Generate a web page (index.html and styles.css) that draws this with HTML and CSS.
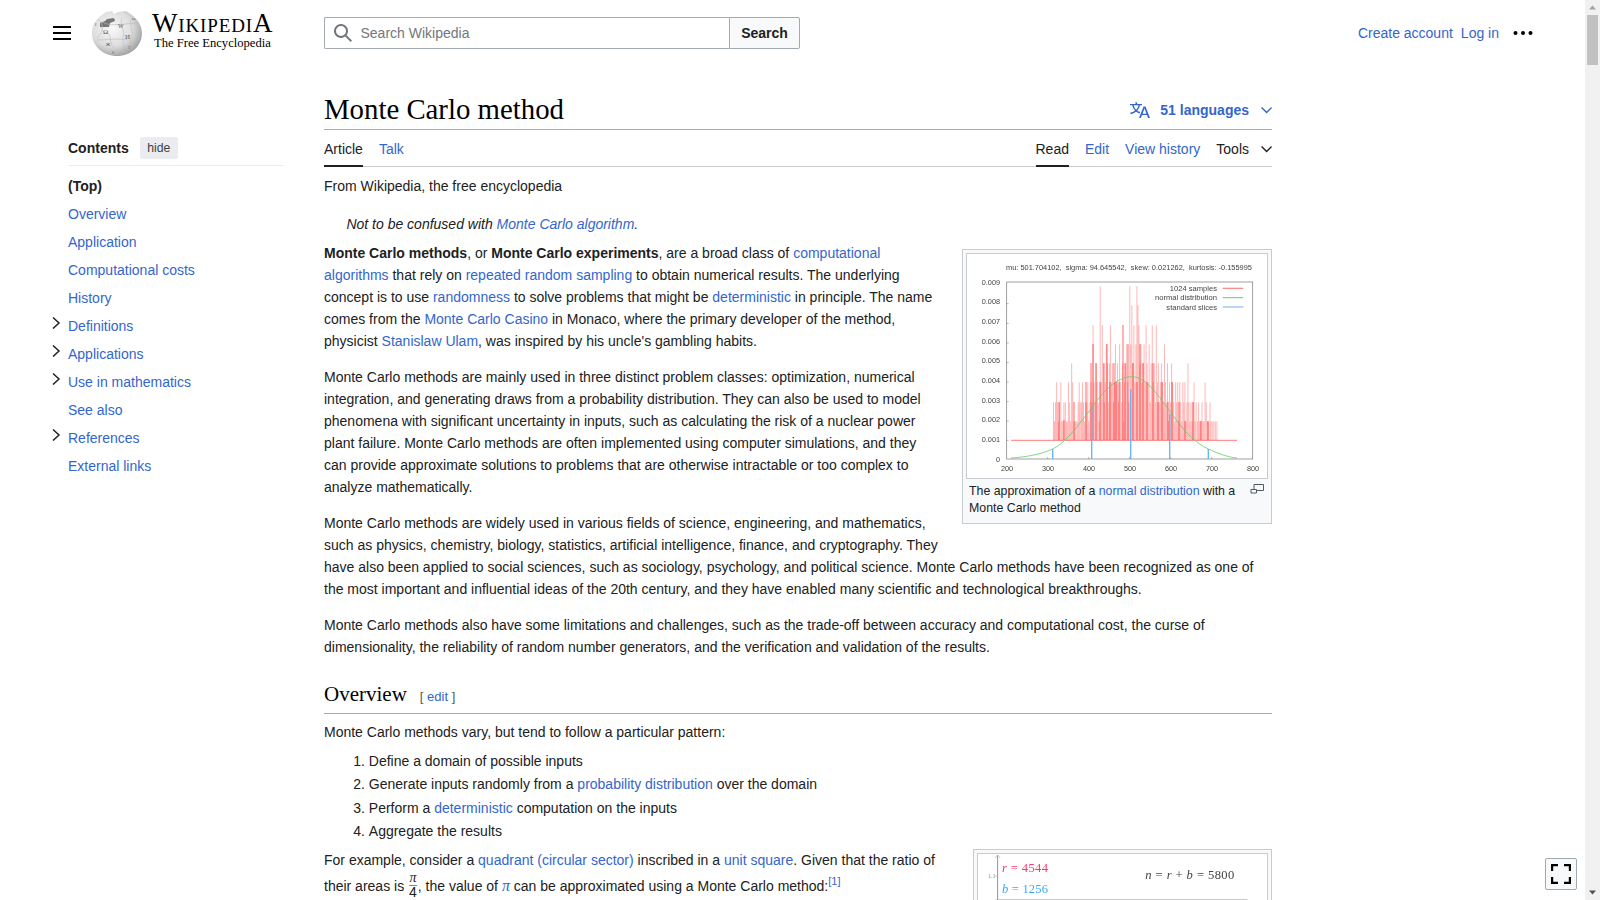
FILE: index.html
```html
<!DOCTYPE html>
<html lang="en">
<head>
<meta charset="utf-8">
<title>Monte Carlo method - Wikipedia</title>
<link rel="stylesheet" href="styles.css">
</head>
<body>
<div class="window">
<div class="page">
  <header class="site-header">
    <div class="brand">
      <svg class="hamburger" viewBox="0 0 20 20" width="20" height="20"><path d="M1 3v2h18V3zm0 8h18V9H1zm0 6h18v-2H1z"/></svg>
      <svg class="globe" viewBox="0 0 50 46" width="50" height="46">
        <defs><radialGradient id="gl" cx="40%" cy="38%" r="68%"><stop offset="0" stop-color="#fafafa"/><stop offset=".6" stop-color="#dcdcdc"/><stop offset="1" stop-color="#9a9a9a"/></radialGradient></defs>
        <path d="M10 5 L14 2 L20 1 L22 4 L26 2 L34 1 L40 5 C46 10 50 16 50 23 C50 36 39 46 25 46 C11 46 0 36 0 23 C0 15 4 9 10 5Z" fill="url(#gl)"/>
        <path d="M8 13 L13 11 L15 9 L22 8 L23 11 L18 13 L17 17 L8 17Z" fill="#777"/>
        <path d="M6 9 C12 14 12 22 5 28 M15 22 C20 26 17 34 22 38 M30 8 C27 16 34 20 31 28 C30 33 34 36 32 43 M40 8 C36 14 43 22 39 28 C36 32 42 36 40 40 M5 30 C14 30 24 28 36 30 M10 12 C20 18 34 12 46 14" fill="none" stroke="#bbb" stroke-width=".6"/>
        <text class="globe-glyph" x="11" y="24" font-size="7">Ω</text>
        <text class="globe-glyph" x="26" y="18" font-size="6">W</text>
        <text class="globe-glyph" x="33" y="29" font-size="7">И</text>
        <text class="globe-glyph" x="14" y="36" font-size="6">ж</text>
        <text class="globe-glyph" x="20" y="44" font-size="4">ই</text>
        <text class="globe-glyph" x="40" y="10" font-size="5">ω</text>
        <text class="globe-glyph" x="36" y="39" font-size="5">?</text>
        <text class="globe-glyph" x="3" y="16" font-size="4">វ</text>
      </svg>
      <div class="wordmark">
        <div class="wm-title">WikipediA</div>
        <div class="wm-tag">The Free Encyclopedia</div>
      </div>
    </div>
    <div class="search">
      <div class="search-input">
        <svg viewBox="0 0 20 20" width="20" height="20"><path d="M12.2 13.6a7 7 0 1 1 1.4-1.4l5.4 5.4-1.4 1.4zM3 8a5 5 0 1 0 10 0A5 5 0 0 0 3 8"/></svg>
        <span>Search Wikipedia</span>
      </div>
      <div class="search-btn">Search</div>
    </div>
    <nav class="user-links">
      <a href="#">Create account</a>
      <a href="#">Log in</a>
      <svg class="dots" viewBox="0 0 20 20" width="20" height="20"><circle cx="2.5" cy="10" r="2"/><circle cx="10" cy="10" r="2"/><circle cx="17.5" cy="10" r="2"/></svg>
    </nav>
  </header>

  <div class="layout">
    <aside class="toc">
      <div class="toc-head"><span class="toc-title">Contents</span><span class="toc-hide">hide</span></div>
      <ul class="toc-list">
        <li class="toc-top">(Top)</li>
        <li><a href="#">Overview</a></li>
        <li><a href="#">Application</a></li>
        <li><a href="#">Computational costs</a></li>
        <li><a href="#">History</a></li>
        <li><svg class="toc-arrow" viewBox="0 0 12 12"><path d="M3 .5 L9 6 L3 11.5" fill="none" stroke="#202122" stroke-width="1.5"/></svg><a href="#">Definitions</a></li>
        <li><svg class="toc-arrow" viewBox="0 0 12 12"><path d="M3 .5 L9 6 L3 11.5" fill="none" stroke="#202122" stroke-width="1.5"/></svg><a href="#">Applications</a></li>
        <li><svg class="toc-arrow" viewBox="0 0 12 12"><path d="M3 .5 L9 6 L3 11.5" fill="none" stroke="#202122" stroke-width="1.5"/></svg><a href="#">Use in mathematics</a></li>
        <li><a href="#">See also</a></li>
        <li><svg class="toc-arrow" viewBox="0 0 12 12"><path d="M3 .5 L9 6 L3 11.5" fill="none" stroke="#202122" stroke-width="1.5"/></svg><a href="#">References</a></li>
        <li><a href="#">External links</a></li>
      </ul>
    </aside>

    <main class="content">
      <div class="title-row">
        <h1>Monte Carlo method</h1>
        <a class="langs" href="#">
          <svg class="lang-icon" viewBox="0 0 20 20" width="20" height="20"><path d="M20 18h-1.44a.6.6 0 0 1-.4-.12.8.8 0 0 1-.23-.31L17 15h-5l-1 2.54a.8.8 0 0 1-.22.3.6.6 0 0 1-.4.14H9l4.55-11.47h1.89zm-3.53-4.31L14.89 9.5a12 12 0 0 1-.39-1.24q-.09.37-.19.69l-.19.56-1.58 4.19zm-6.3-1.58a13.4 13.4 0 0 1-2.91-1.41 11.46 11.46 0 0 0 2.81-5.37H12V4H7.31a4 4 0 0 0-.2-.56C6.87 2.79 6.6 2 6.6 2l-1.47.5s.4.89.6 1.5H0v1.33h2.15A11.23 11.23 0 0 0 5 10.7a17.2 17.2 0 0 1-5 2.1q.56.82.87 1.38a23.3 23.3 0 0 0 5.22-2.51 15.6 15.6 0 0 0 3.56 1.77zM3.63 5.33h4.91a8.1 8.1 0 0 1-2.45 4.45 9.1 9.1 0 0 1-2.46-4.45"/></svg>
          <span>51 languages</span>
          <svg class="chev" viewBox="0 0 12 12" width="12" height="12"><path d="m11.6 3.5-5 5-5-5" fill="none" stroke="currentColor" stroke-width="1.4"/></svg>
        </a>
      </div>
      <div class="tabs">
        <div class="tab-group">
          <a class="tab is-active" href="#">Article</a>
          <a class="tab" href="#">Talk</a>
        </div>
        <div class="tab-group">
          <a class="tab is-active" href="#">Read</a>
          <a class="tab" href="#">Edit</a>
          <a class="tab" href="#">View history</a>
          <span class="tab tab-tools">Tools <svg class="chev" viewBox="0 0 12 12" width="12" height="12"><path d="m11.6 3.5-5 5-5-5" fill="none" stroke="currentColor" stroke-width="1.4"/></svg></span>
        </div>
      </div>

      <article class="article">
        <div class="sitesub">From Wikipedia, the free encyclopedia</div>
        <div class="hatnote">Not to be confused with <a href="#">Monte Carlo algorithm</a>.</div>

        <figure class="thumb thumb-a">
          <div class="thumb-img">
            <svg class="plot" viewBox="0 0 300 224" width="300" height="224">
              <g class="plot-txt">
                <text x="39" y="16" textLength="246" lengthAdjust="spacingAndGlyphs">mu: 501.704102,&#160;&#160;sigma: 94.645542,&#160;&#160;skew: 0.021262,&#160;&#160;kurtosis: -0.155995</text>
                <g text-anchor="end">
                  <text x="33" y="30.5">0.009</text><text x="33" y="50">0.008</text><text x="33" y="69.8">0.007</text><text x="33" y="89.5">0.006</text><text x="33" y="109">0.005</text><text x="33" y="128.8">0.004</text><text x="33" y="148.5">0.003</text><text x="33" y="168">0.002</text><text x="33" y="187.8">0.001</text><text x="33" y="207.5">0</text>
                </g>
                <g text-anchor="middle">
                  <text x="40" y="217">200</text><text x="81" y="217">300</text><text x="122" y="217">400</text><text x="163" y="217">500</text><text x="204" y="217">600</text><text x="245" y="217">700</text><text x="286" y="217">800</text>
                </g>
                <g class="plot-legend" text-anchor="end">
                  <text x="250" y="36.5">1024 samples</text><text x="250" y="46">normal distribution</text><text x="250" y="55.5">standard slices</text>
                </g>
              </g>
              <rect x="39.7" y="28" width="246" height="177" fill="none" stroke="#777" stroke-width=".7"/>
              <path d="M80.7 205v-2M121.7 205v-2M162.7 205v-2M203.7 205v-2M244.7 205v-2M39.7 186.3h2M39.7 167h2M39.7 147.6h2M39.7 128h2M39.7 108.6h2M39.7 89h2M39.7 69.4h2M39.7 49.7h2" stroke="#777" stroke-width=".5" fill="none"/>
              <path class="hist-base" d="M44 186.3H270"/>
              <g transform="translate(86.5 0) scale(1.02 1)">
              <path class="hist" d="M0 186.3v-38m1 38v-19m1 19v-38m1 38v-58m1 58v-38m1 38v-19m1 19v-38m1.2 38v-58m1 58v-19m1 19v-19m1 19v-38m1.4 38v-38m1 38v-19m1 19v-19m1 19v-58m1.2 58v-38m1 38v-19m1 19v-77m1 77v-58m1.2 58v-19m1 19v-19m1 19v-19m1.2 19v-19m1 19v-38m1 38v-58m1 58v-38m1.2 38v-38m1 38v-58m1 58v-38m1 38v-19m1.2 19v-38m1 38v-38m1 38v-58m1 58v-19m1.2 19v-38m1 38v-58m1 58v-38m1 38v-115m1 115v-58m1 58v-38m1 38v-77m1 77v-58m1 58v-38m1 38v-19m1 19v-154m1 154v-58m1 58v-115m1 115v-77m1 77v-38m1 38v-58m1 58v-96m1 96v-77m1 77v-38m1 38v-77m1 77v-115m1 115v-58m1 58v-77m1 77v-38m1 38v-58m1 58v-96m1 96v-58m1 58v-77m1 77v-38m1 38v-96m1 96v-58m1 58v-38m1 38v-77m1 77v-19m1 19v-58m1 58v-77m1 77v-96m1 96v-58m1 58v-38m1 38v-154m1 154v-96m1 96v-135m1 135v-77m1 77v-115m1 115v-58m1 58v-96m1 96v-154m1 154v-135m1 135v-115m1 115v-77m1 77v-96m1 96v-58m1 58v-77m1 77v-96m1 96v-58m1 58v-115m1 115v-77m1 77v-58m1 58v-96m1 96v-38m1 38v-77m1 77v-115m1 115v-58m1 58v-77m1 77v-38m1 38v-115m1 115v-58m1 58v-77m1 77v-38m1 38v-58m1 58v-77m1 77v-58m1 58v-38m1 38v-96m1 96v-58m1 58v-38m1 38v-77m1 77v-19m1 19v-58m1 58v-38m1 38v-77m1 77v-58m1 58v-38m1 38v-19m1 19v-58m1 58v-38m1 38v-58m1 58v-19m1 19v-58m1 58v-38m1 38v-19m1 19v-58m1 58v-38m1 38v-58m1 58v-19m1 19v-38m1 38v-77m1 77v-38m1 38v-19m1 19v-38m1 38v-19m1 19v-38m1 38v-58m1 58v-19m1 19v-38m1.4 38v-19m1 19v-38m1 38v-19m1 19v-19m1.4 19v-38m1 38v-19m1 19v-19m1 19v-58m1.2 58v-38m1 38v-19m1 19v-19m1.6 19v-38m1 38v-19m1.2 19v-19m1.6 19v-19m1.4 19v-19m1.6 19v-19"/>
              </g>
              <path class="hist-red" d="M92 186v-38M97 186v-20M107 186v-38M119 186v-58M124 186v-77M126 186v-96M129 186v-77M133 186v-58M137 186v-77M140 186v-96M143 186v-58M147 186v-77M149 186v-58M152 186v-58M156 186v-115M158 186v-77M161 186v-96M166 186v-77M170 186v-58M173 186v-96M176 186v-77M180 186v-58M186 186v-77M191 186v-38M195 186v-58M201 186v-38M205 186v-58M212 186v-38M218 186v-19M226 186v-38M234 186v-19M241 186v-19"/>
              <path d="M85.7 205v-10M124.7 205v-51M163.7 205v-70M202.7 205v-45M241.3 205v-10" stroke="#6fb4f5" stroke-width="1.4" fill="none"/>
              <path d="M44 204C60 203 75 200 85.7 195 100 188 112 170 124.7 154 135 138 150 122.7 164.7 122.7 180 122.7 192 143 205 160 215 175 228 189 241.3 195 250 199 260 203 270 204" fill="none" stroke="#66cc66" stroke-width=".8"/>
              <path d="M255.7 34.3h20.6" stroke="#f77" stroke-width="1.1"/>
              <path d="M255.7 43.7h20.6" stroke="#6c6" stroke-width="1"/>
              <path d="M255.7 53h20.6" stroke="#6fb4f5" stroke-width="1"/>
            </svg>
          </div>
          <figcaption class="caption">
            <svg class="magnify" viewBox="0 0 15 11" width="15" height="11"><path d="M1 6.5h5.5v3.5H1zM4 6.5V1.5h9.5v6H6.5" fill="#f8f9fa" stroke="#54595d" stroke-width="1"/></svg>
            The approximation of a <a href="#">normal distribution</a> with a Monte Carlo method
          </figcaption>
        </figure>

        <p><b>Monte Carlo methods</b>, or <b>Monte Carlo experiments</b>, are a broad class of <a href="#">computational algorithms</a> that rely on <a href="#">repeated random sampling</a> to obtain numerical results. The underlying concept is to use <a href="#">randomness</a> to solve problems that might be <a href="#">deterministic</a> in principle. The name comes from the <a href="#">Monte Carlo Casino</a> in Monaco, where the primary developer of the method, physicist <a href="#">Stanislaw Ulam</a>, was inspired by his uncle's gambling habits.</p>
        <p>Monte Carlo methods are mainly used in three distinct problem classes: optimization, numerical integration, and generating draws from a probability distribution. They can also be used to model phenomena with significant uncertainty in inputs, such as calculating the risk of a nuclear power plant failure. Monte Carlo methods are often implemented using computer simulations, and they can provide approximate solutions to problems that are otherwise intractable or too complex to analyze mathematically.</p>
        <p>Monte Carlo methods are widely used in various fields of science, engineering, and mathematics, such as physics, chemistry, biology, statistics, artificial intelligence, finance, and cryptography. They have also been applied to social sciences, such as sociology, psychology, and political science. Monte Carlo methods have been recognized as one of the most important and influential ideas of the 20th century, and they have enabled many scientific and technological breakthroughs.</p>
        <p>Monte Carlo methods also have some limitations and challenges, such as the trade-off between accuracy and computational cost, the curse of dimensionality, the reliability of random number generators, and the verification and validation of the results.</p>

        <h2>Overview<span class="editsec">[ <a href="#">edit</a> ]</span></h2>
        <p class="lead-in">Monte Carlo methods vary, but tend to follow a particular pattern:</p>
        <ol>
          <li>Define a domain of possible inputs</li>
          <li>Generate inputs randomly from a <a href="#">probability distribution</a> over the domain</li>
          <li>Perform a <a href="#">deterministic</a> computation on the inputs</li>
          <li>Aggregate the results</li>
        </ol>

        <figure class="thumb thumb-b">
          <div class="thumb-img">
            <svg class="plot" viewBox="0 0 289 60" width="289" height="60">
              <path d="M19.6 1V46H269.6" fill="none" stroke="#888" stroke-width=".9"/>
              <path d="M17 4l2.6-3 2.6 3M17 22h2.6M17 46h2.6" fill="none" stroke="#aaa" stroke-width=".6"/>
              <text class="lbl-n" x="10" y="24">1.1</text>
              <text class="mathv red" x="24" y="18.4" textLength="46"><tspan class="mi">r</tspan> = 4544</text>
              <text class="mathv blue" x="24" y="39.4" textLength="46"><tspan class="mi">b</tspan> = 1256</text>
              <text class="mathv" x="167.3" y="24.7" textLength="89"><tspan class="mi">n</tspan> = <tspan class="mi">r</tspan> + <tspan class="mi">b</tspan> = 5800</text>
            </svg>
          </div>
        </figure>

        <p>For example, consider a <a href="#">quadrant (circular sector)</a> inscribed in a <a href="#">unit square</a>. Given that the ratio of their areas is <span class="frac"><i>π</i><i class="frac-b">4</i></span>, the value of <a class="pi" href="#"><i>π</i></a> can be approximated using a Monte Carlo method:<sup><a href="#">[1]</a></sup></p>
      </article>
    </main>
  </div>
</div>

<div class="scrollbar">
  <svg class="sb-arrow" viewBox="0 0 15 15" width="15" height="15"><path d="M4 9.5h7L7.5 5.5z" fill="#a3a3a3"/></svg>
  <div class="sb-thumb"></div>
  <div class="sb-track"></div>
  <svg class="sb-arrow" viewBox="0 0 15 15" width="15" height="15"><path d="M4 5.5h7L7.5 9.5z" fill="#505050"/></svg>
</div>
<button class="fullscreen" type="button"><svg viewBox="0 0 20 20" width="20" height="20"><path d="M1 7V1h6M13 1h6v6M19 13v6h-6M7 19H1v-6" fill="none" stroke="#000" stroke-width="2.4"/></svg></button>
</div>
</body>
</html>
```
FILE: styles.css
```css
* { box-sizing: border-box; }
html, body { margin: 0; height: 100%; overflow: hidden; background: #fff; }
body { font-family: "Liberation Sans", Arial, sans-serif; font-size: 14px; line-height: 22px; color: #202122; }
a { color: #36c; text-decoration: none; }

.window { display: flex; height: 100vh; position: relative; }
.page { flex: 1; min-width: 0; overflow: hidden; }

/* scrollbar */
.scrollbar { width: 15px; background: #f1f1f1; display: flex; flex-direction: column; }
.sb-arrow { display: block; flex: none; }
.sb-thumb { height: 50px; margin: 0 2px; background: #c1c1c1; flex: none; }
.sb-track { flex: 1; }

.fullscreen { position: absolute; left: 1545px; top: 858px; width: 32px; height: 32px; padding: 0; background: #f8f9fa; border: 1px solid #a2a9b1; border-radius: 2px; display: flex; align-items: center; justify-content: center; }

/* header */
.site-header { display: grid; grid-template-columns: 324px 476px 1fr; height: 66px; align-items: center; padding-right: 52px; }
.brand { display: flex; align-items: center; padding-left: 52px; }
.hamburger { flex: none; fill: #000; }
.globe { flex: none; margin-left: 20px; margin-top: -1px; }
.globe-glyph { font-family: "Liberation Serif", "DejaVu Serif", serif; fill: #555; }
.wordmark { margin: -4px 0 0 10px; color: #000; font-family: "Liberation Serif", serif; }
.wm-title { font-size: 27px; line-height: 22px; font-variant: small-caps; letter-spacing: .85px; white-space: nowrap; }
.wm-tag { font-size: 12.6px; line-height: 15px; margin: 2px 0 0 2px; white-space: nowrap; }
.search { display: flex; height: 32px; }
.search-input { flex: 1; display: flex; align-items: center; gap: 7.5px; padding-left: 7px; padding-bottom: 1px; border: 1px solid #a2a9b1; border-right: 0; border-radius: 2px 0 0 2px; color: #72777d; background: #fff; }
.search-input svg { fill: #72777d; flex: none; margin-left: 1px; }
.search-btn { width: 71px; border: 1px solid #a2a9b1; border-radius: 0 2px 2px 0; background: #f8f9fa; font-weight: bold; text-align: center; line-height: 30px; }
.user-links { display: flex; align-items: center; justify-content: flex-end; gap: 8px; }
.dots { margin-left: 6px; fill: #000; }

/* layout */
.layout { display: grid; grid-template-columns: 324px 948px; }
.toc { padding: 71px 40px 0 68px; }
.toc-head { display: flex; align-items: center; gap: 11px; height: 29px; border-bottom: 1px solid #eaecf0; padding-bottom: 6px; }
.toc-title { font-weight: bold; }
.toc-hide { background: #eaecf0; border-radius: 2px; font-size: 12.25px; line-height: 22px; padding: 0 7.5px; color: #404244; }
.toc-list { list-style: none; margin: 6px 0 0; padding: 0; }
.toc-list li { height: 28px; line-height: 28px; position: relative; }
.toc-top { font-weight: bold; }
.toc-arrow { position: absolute; left: -18px; top: 5px; width: 12px; height: 12px; }

/* content */
.content { padding-top: 23px; min-width: 0; }
.title-row { display: flex; justify-content: space-between; align-items: center; height: 41px; border-bottom: 1px solid #a2a9b1; }
h1 { margin: 0; font: normal 28.8px/36px "Liberation Serif", serif; color: #000; }
.langs { display: flex; align-items: center; font-weight: bold; padding-top: 2px; }
.lang-icon { fill: #36c; margin-right: 10px; }
.chev { margin-left: 11px; }
.tabs { display: flex; justify-content: space-between; height: 37px; border-bottom: 1px solid #c8ccd1; }
.tab-group { display: flex; gap: 16px; }
.tab { display: block; line-height: 38px; height: 37px; }
.tab.is-active { color: #202122; border-bottom: 2px solid #202122; }
.tab-tools { display: flex; align-items: center; gap: 0; color: #202122; }
.tab-tools .chev { margin-left: 11px; margin-right: 0; }

.article { overflow: hidden; height: 740px; }
.sitesub { margin-top: 8px; }
.hatnote { margin: 16px 0 0; padding-left: 22.4px; font-style: italic; }
p { margin: 7px 0 14px; }
p.lead-in { margin-bottom: 7px; }
.thumb { float: right; clear: right; margin: 0; background: #f8f9fa; border: 1px solid #c8ccd1; padding: 3px; }
.thumb-a { width: 310px; margin: 14px 0 19px 20px; height: 275px; }
.thumb-b { width: 299px; margin: 5px 0 14px 20px; }
.thumb-b .thumb-img { height: 100px; }
.thumb-img { border: 1px solid #c8ccd1; background: #fff; line-height: 0; }
.plot { display: block; filter: blur(.3px); }
.plot-txt text { font-size: 7.3px; fill: #444; font-family: "Liberation Sans", sans-serif; }
.plot-txt .plot-legend text { font-size: 7.6px; }
.hist { fill: none; stroke: #ff5a5a; stroke-width: .55; stroke-opacity: .8; }
.hist-base { fill: none; stroke: #ff7a7a; stroke-width: 1; }
.hist-red { fill: none; stroke: #f00; stroke-width: .7; stroke-opacity: .85; }
.caption { font-size: 12.35px; line-height: 17px; padding: 4px 3px 0 3px; }
.magnify { float: right; margin: 0 0 0 6px; }
.lbl-n { font: 6px "Liberation Serif", serif; fill: #888; }
.mathv { font: 12.5px "Liberation Serif", serif; fill: #444; }
.mi { font-style: italic; }
.mathv.red { fill: #ff3366; }
.mathv.blue { fill: #33aaff; }
h2 { clear: none; margin: 21px 0 7px; padding-bottom: 3px; font: normal 21px/31px "Liberation Serif", serif; color: #000; border-bottom: 1px solid #a2a9b1; }
.editsec { font: 13px/20px "Liberation Sans", sans-serif; margin-left: 13px; color: #54595d; }
ol { margin: 7px 0 0; padding-left: 44.8px; }
ol li { margin-bottom: 1.4px; }
.frac { display: inline-flex; flex-direction: column; align-items: center; vertical-align: middle; padding: 0 1px; margin-bottom: 5px; font: 14px/13.5px "Liberation Serif", serif; }
.frac-b { font-style: normal; border-top: 1px solid #888; font-family: "Liberation Sans", sans-serif; }
.pi { font: 16px/0 "Liberation Serif", serif; }
sup { font-size: 11px; line-height: 0; vertical-align: 6px; }
```
